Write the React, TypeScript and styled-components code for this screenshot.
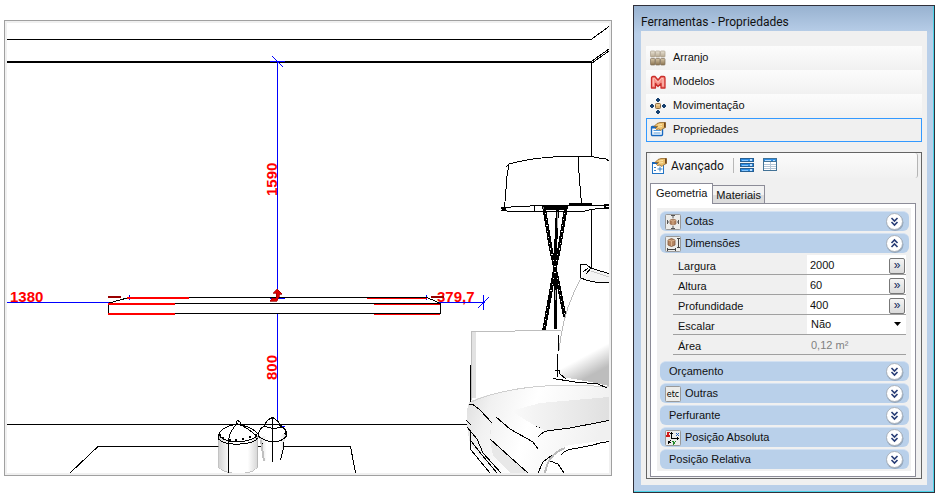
import React from "react";
import styled, { createGlobalStyle } from "styled-components";

const GlobalStyle = createGlobalStyle`
  * { box-sizing: border-box; }
  body { margin: 0; background: #fff; }
  button, input, select { font: inherit; color: inherit; }
`;

const Page = styled.main`
  display: flex;
  align-items: flex-start;
  gap: 21px;
  padding: 5px 6px 4px 4px;
  font: 11px/16px "Liberation Sans", Arial, sans-serif;
  color: #111;
`;

const Viewport = styled.section`
  flex: 1 1 0;
  min-width: 0;
  margin-top: 15px;
  border: 1px solid #a0a0a0;
  padding: 2px;
  background: #f0f0f0;
`;

const SceneSvg = styled.svg`
  display: block;
  width: 100%;
  height: auto;
  background: #fff;
`;

const Dimension = styled.text`
  font: bold 15px "Liberation Sans", Arial, sans-serif;
  fill: #f00;
`;

const Window = styled.aside`
  flex: 0 0 302px;
  border: 1px solid #30303a;
  background: linear-gradient(#98b2d0, #b9cfe9 28px);
  padding: 1px 7px 7px 7px;
  box-shadow: inset -1px -1px 0 #4bd3e8;
`;

const Title = styled.h1`
  margin: 0;
  height: 24px;
  font: 400 12px/30px Roboto, sans-serif;
`;

const Client = styled.div`
  background: #f0f0f0;
  padding: 15px 5px 6px;
`;

const ToolList = styled.nav`
  display: flex;
  flex-direction: column;
  margin-bottom: 10px;
`;

const ToolButton = styled.button<{ $active?: boolean }>`
  display: flex;
  align-items: center;
  gap: 7px;
  height: 24px;
  padding: 0 3px;
  text-align: left;
  border: 1px solid ${(p) => (p.$active ? "#3399ff" : "transparent")};
  background: ${(p) => (p.$active ? "#f0f0f0" : "linear-gradient(#fcfcfc, #f1f1f1)")} border-box;

  span { padding-bottom: 2px; }
`;

const Icon = styled.svg`
  flex: none;
  width: 16px;
  height: 16px;
`;

const Group = styled.div`
  border: 1px solid #646464;
  padding: 0 3px 1px;
`;

const Toolbar = styled.div`
  display: flex;
  align-items: center;
  height: 25px;
  margin-bottom: 5px;
  padding-left: 1px;
  border-right: 1px solid #b4b4b4;
  border-radius: 3px;
  background: linear-gradient(#fbfbfb, #f1f1f1);
`;

const TextTool = styled.button`
  display: flex;
  align-items: center;
  gap: 4px;
  padding: 0;
  border: 0;
  background: none;
  font: 12px/16px Roboto, sans-serif;
`;

const Separator = styled.div`
  width: 1px;
  height: 15px;
  margin: 0 5px 0 9px;
  background: #b8b8b8;
`;

const IconTool = styled.button`
  display: flex;
  padding: 0;
  margin: 0 7px 1px 0;
  border: 0;
  background: none;
`;

const Tabs = styled.div`
  display: flex;
  align-items: flex-end;
`;

const Tab = styled.button<{ $active?: boolean }>`
  height: ${(p) => (p.$active ? "21px" : "18px")};
  margin-bottom: ${(p) => (p.$active ? "-1px" : "0")};
  padding: ${(p) => (p.$active ? "0 5px 2px" : "0 3px")};
  border: 1px solid #8c8c98;
  border-bottom: 0;
  border-left-width: ${(p) => (p.$active ? "1px" : "0")};
  background: ${(p) => (p.$active ? "#fff" : "linear-gradient(#f2f2f2 50%, #dcdcdc 55%)")};
  position: relative;
`;

const TabPage = styled.div`
  margin-right: 2px;
  border: 1px solid #8c8c98;
  background: #fff;
  padding: 4px 4px 5px 6px;
`;

const Sections = styled.div`
  display: flex;
  flex-direction: column;
  gap: 2px;
  padding: 3px 2px 2px 3px;
  background: #f0f0f0;
`;

const SectionHeader = styled.button<{ $icon?: boolean }>`
  display: flex;
  align-items: center;
  gap: 4px;
  width: 100%;
  height: 20px;
  padding: 0 5px 0 ${(p) => (p.$icon ? "5px" : "9px")};
  border: 0;
  border-top: 1px solid #d3e1f2;
  border-radius: 6px;
  background: #b9d0ea;
  text-align: left;

  span { flex: 1; padding-bottom: 1px; }
`;

const Badge = styled.svg`
  flex: none;
  width: 16px;
  height: 16px;
`;

const Round = styled.svg`
  flex: none;
  width: 19px;
  height: 19px;
`;

const Fields = styled.div`
  display: flex;
  flex-direction: column;
  margin: 0 3px 4px 13px;
`;

const Field = styled.div`
  display: flex;
  align-items: stretch;
  height: 20px;
  border-bottom: 1px solid #a0a0a0;
`;

const Label = styled.label`
  flex: 1 1 134px;
  padding: 3px 0 0 5px;
`;

const ValueBox = styled.div<{ $plain?: boolean }>`
  display: flex;
  align-items: center;
  flex: 0 1 99px;
  min-width: 0;
  background: ${(p) => (p.$plain ? "transparent" : "#fff")};
`;

const TextInput = styled.input`
  flex: 1 1 0;
  min-width: 0;
  padding: 0 0 0 3px;
  border: 0;
  background: transparent;
`;

const MoreButton = styled.button`
  width: 16px;
  height: 16px;
  margin: 2px 1px 0 0;
  padding: 0 0 2px;
  border: 1px solid #777;
  border-radius: 2px;
  background: linear-gradient(#f4f4f4, #dadada);
  color: #10285a;
  font-size: 12px;
  line-height: 12px;
`;

const SelectWrap = styled.div`
  position: relative;
  display: flex;
  flex: 1;
`;

const Select = styled.select`
  flex: 1;
  appearance: none;
  border: 0;
  padding: 0 16px 1px 4px;
  background: transparent;
`;

const Arrow = styled.svg`
  position: absolute;
  right: 5px;
  top: 6px;
  width: 7px;
  height: 4px;
  pointer-events: none;
`;

const Output = styled.output`
  padding-left: 4px;
  color: #808080;
`;

const ArrangeIcon = () => (
  <Icon viewBox="0 0 16 16">
    <defs>
      <linearGradient id="blockLight" x2="0" y2="1"><stop stopColor="#e9e3d6" /><stop offset="1" stopColor="#b5a78f" /></linearGradient>
      <linearGradient id="blockDark" x2="0" y2="1"><stop stopColor="#d6c6a8" /><stop offset="1" stopColor="#8b7350" /></linearGradient>
    </defs>
    {[0, 5, 10].map((x) => (
      <g key={x}>
        <rect x={x + 0.5} y="1" width="4.500" height="6" rx=".8" fill="url(#blockLight)" stroke="#aa9e8b" strokeWidth=".7" />
        <rect x={x + 0.5} y="8.500" width="4.500" height="6.500" rx=".8" fill="url(#blockDark)" stroke="#80705a" strokeWidth=".7" />
      </g>
    ))}
  </Icon>
);

const ModelsIcon = () => (
  <Icon viewBox="0 0 16 16">
    <path d="M1.500 14V4Q1.500 2.500 3 2.500H5L8 6L11 2.500H13.500Q15 2.500 15 4V14H11V9.500L8 12.500L5.500 9.500V14Z" fill="#f58f86" stroke="#cb2f2c" strokeWidth="1.300" strokeLinejoin="round" />
    <path d="M3.300 12V4.500H4.500L8 8.500L11.500 4.500H13V12" fill="none" stroke="#ffc4bb" />
  </Icon>
);

const MoveIcon = () => (
  <Icon viewBox="0 0 16 16">
    <g fill="#17406f">
      <path d="M7 0h2v1h1v2H9v1H7V3H6V1h1zM7 16h2v-1h1v-2H9v-1H7v1H6v2h1zM0 7v2h1v1h2V9h1V7H3V6H1v1zM16 7v2h-1v1h-2V9h-1V7h1V6h2v1z" />
    </g>
    <rect x="5.500" y="5.500" width="5" height="5" rx="1" fill="#dfb36f" stroke="#8a6a42" />
    <path d="M6 7h4" stroke="#f8e0b0" />
  </Icon>
);

const Hand = () => (
  <g>
    <path d="M4 4.500L7 1.500L10 .5H15.500V5.500L13 6.500L11 8.500L9 7L6.500 7.500L5.500 6.500L7.500 4.500Z" fill="#ecbf6c" stroke="#8f6428" strokeWidth=".8" />
    <path d="M8 3l4-.5M8 5l4-.5" stroke="#fff0b8" strokeWidth=".8" />
    <path d="M14 0.500h1.500v5H14z" fill="#70461b" />
  </g>
);

const PropertiesIcon = () => (
  <Icon viewBox="0 0 16 16">
    <rect x="1.500" y="4.500" width="11" height="9" rx="1" fill="#fff" stroke="#1768c0" strokeWidth="1.400" />
    <path d="M1 5.500h8" stroke="#1768c0" strokeWidth="2" />
    <path d="M3.500 8.500h7M3.500 11h7" stroke="#5299da" />
    <Hand />
  </Icon>
);

const AdvancedIcon = () => (
  <Icon viewBox="0 0 16 16">
    <rect x="1.500" y="4.500" width="11" height="11" fill="#fff" stroke="#2474c4" />
    <path d="M1 5h8" stroke="#1768c0" strokeWidth="2" />
    <path d="M3 9.500h2M3 12.500h2M6.500 11h5M9 8.500v5" stroke="#3682c8" />
    <Hand />
  </Icon>
);

const RowsIcon = () => (
  <Icon viewBox="0 0 16 16" shapeRendering="crispEdges">
    {[1, 6, 11].map((y) => (
      <g key={y}>
        <rect x="1" y={y} width="14" height="4" fill="#275f92" />
        <rect x="2" y={y + 1} width="12" height="2" fill="#2d8de4" />
        <rect x="3" y={y + 2} width="6" height="1" fill="#83c5ff" />
        <rect x="11" y={y + 1} width="2" height="2" fill="#bfe0ff" />
      </g>
    ))}
  </Icon>
);

const TableIcon = () => (
  <Icon viewBox="0 0 16 16" shapeRendering="crispEdges">
    <rect x="1" y="1" width="14" height="13" fill="#427296" />
    <rect x="2" y="2" width="12" height="2" fill="#2d8de4" />
    <path d="M3 3.500h6M11 3h2" stroke="#b9deff" />
    <rect x="2" y="5" width="12" height="8" fill="#fff" />
    <path d="M2 7.500h12M2 9.500h12M2 11.500h12M8.500 5v8" stroke="#b5c6d6" />
  </Icon>
);

type BadgeKind = "cotas" | "dim" | "etc" | "axes";

const SectionBadge = ({ kind }: { kind: BadgeKind }) => (
  <Badge viewBox="0 0 16 16">
    <rect x=".5" y=".5" width="15" height="15" rx="1" fill="#ececea" stroke="#999" />
    {kind === "cotas" && (
      <>
        <path d="M6 1.500h4M6 14.500h4M8 2v2M8 12v2M2.500 6v4M13.500 6v4M2 8h2M12 8h2" stroke="#555" fill="none" />
        <path d="M5 6l3-1 3 1v4l-3 1-3-1z" fill="#b48460" stroke="#886044" strokeWidth=".6" />
        <path d="M5 6l3 1 3-1M8 7v4" stroke="#e3bd98" strokeWidth=".7" fill="none" />
      </>
    )}
    {kind === "dim" && (
      <>
        <path d="M3 4l3.500-1.500L10 4v5l-3.500 1.500L3 9z" fill="#b48460" stroke="#7d573c" strokeWidth=".8" />
        <path d="M3 4l3.500 1L10 4M6.500 5v5" stroke="#e3bd98" strokeWidth=".8" fill="none" />
        <path d="M2 13.500h9M2.500 12v3M10.500 12v3M13.500 2.500v9M12 2.500h3M12 11.500h3" stroke="#444" fill="none" />
      </>
    )}
    {kind === "etc" && (
      <text x="8" y="11" textAnchor="middle" fontFamily="DejaVu Sans, sans-serif" fontSize="8" fill="#000">etc</text>
    )}
    {kind === "axes" && (
      <g shapeRendering="crispEdges">
        <path d="M6.500 2v7M6.500 8.500H14M5 3.500h3M12.500 7v3M5.500 10.500l-2 2M3.500 11v3M3 12.500h3" stroke="#000" fill="none" />
        <path d="M1.500 3h2.500L2 6h2.500" stroke="#d01818" strokeWidth="1.400" fill="none" />
        <path d="M11 3l3 3M14 3l-3 3" stroke="#2860b8" />
        <path d="M7.500 11l1.500 2M10.500 11L8 15" stroke="#208828" />
      </g>
    )}
  </Badge>
);

const Chevron = ({ up }: { up?: boolean }) => (
  <Round viewBox="0 0 19 19">
    <circle cx="10" cy="10.500" r="8.500" fill="#8799af" opacity=".75" />
    <circle cx="9.500" cy="9.500" r="8" fill="#fff" stroke="#aab2bc" />
    <path d={up ? "M6.500 9l3-3 3 3M6.500 13l3-3 3 3" : "M6.500 6l3 3 3-3M6.500 10l3 3 3-3"} fill="none" stroke="#273c75" strokeWidth="1.600" />
  </Round>
);

const Section = ({ title, kind, open }: { title: string; kind?: BadgeKind; open?: boolean }) => (
  <SectionHeader $icon={!!kind} aria-expanded={!!open}>
    {kind && <SectionBadge kind={kind} />}
    <span>{title}</span>
    <Chevron up={open} />
  </SectionHeader>
);

const NumberField = ({ id, label, value }: { id: string; label: string; value: string }) => (
  <Field>
    <Label htmlFor={id}>{label}</Label>
    <ValueBox>
      <TextInput id={id} defaultValue={value} />
      <MoreButton aria-label={label}>»</MoreButton>
    </ValueBox>
  </Field>
);

const Lamp = () => (
  <g fill="none" stroke="#000">
    <g strokeWidth="3.500">
      <path d="M544 207L551 250L555 268L565 317" />
      <path d="M566 207L559 250L555 268L544 330" />
      <path d="M557.500 208L555.500 250V330" strokeWidth="3" />
    </g>
    <path d="M544 207L551 250L555 268L565 317M566 207L559 250L555 268L544 330" stroke="#fff" strokeWidth="1" strokeDasharray="1 5" />
    <path d="M555.500 290V300M557 212V228" stroke="#aaa" />
    <path d="M506 167L509 164Q530 158 560 156.500H592L599 158L605 158L609 161M509 164L507 176L504.500 208M578.500 157L579 173L581.500 204" />
    <path d="M501 208.500L511 207L540 205.500H609M501 210.500L513 211.500H583L591 209.500L609 207.500M534.500 206V211" />
    <path d="M542 206h26l-3 3h-22z" fill="#888" />
    <path d="M544 208h24M569 204h23" strokeWidth="2" />
    <path d="M501 208l5 1-4 1M609 205h-4v3h4" strokeWidth="2" />
  </g>
);

const Sofa = () => (
  <g fill="none" stroke="#000">
    <path d="M471 332L561 329V392L471 402Z" fill="#fff" stroke="none" />
    <path d="M473.500 332V398" stroke="#e2e2e2" strokeWidth="4" />
    <path d="M471.500 332V400M471 331.500H515M515 330.500H561" stroke="#bdbdbd" />
    <path d="M581 278Q565 308 561 336Q556 370 562 377Q582 380 609 386V283Q595 284 581 278Z" fill="url(#cushion)" stroke="none" />
    <path d="M581 278Q565 308 561 336L559 350" stroke="#bbb" />
    <path d="M469 402Q490 391 540 387Q575 383 609 387V473H492L470 444Q464 415 469 402Z" fill="url(#seat)" stroke="none" />
    <path d="M511 411L540 403L609 397V420L547 431L537 427Z" fill="url(#pad)" stroke="none" />
    <path d="M492 420Q488 438 493 455L510 473H528L490 439Z" fill="#e8e8e8" stroke="none" />
    <path d="M471 402Q500 389 545 386Q575 384 609 387" stroke="#cfcfcf" />
    <path d="M545 473Q550 450 570 445L609 440V473Z" fill="#fff" stroke="none" />
    <path d="M545 473Q548 454 565 448" stroke="#bbb" strokeWidth="2" />
    <path d="M591 268L600 270L609 274V283Q595 284 581 278L586 270Z" fill="#f4f4f4" stroke="none" />
    <path d="M591 271L609 277" stroke="#c8c8c8" />
    <g>
      <path d="M580.500 278V264.500H586L591 268L586 274M588 268L583 272M591 268L597 270L609 273.500M581 278Q591 283 609 283" />
      <path d="M558.500 335V351M557.500 354V377M553 378.500L575 382L598 384L607 388M555 370.500H559L560 374L566 379" />
      <path d="M470.500 365V402M470.500 431V450M469 404.500H473L480 410L492 423M466 420L471 425" />
      <path d="M496 417L510 429L533 442L538 449M490 439L510 457L528 473" />
      <path d="M467 427L477 439L483 453L501 473M471 441L482 455L497 473M471 450L490 473" />
      <path d="M538 437Q543 431 550 430.500L570 428L609 420.500M536 426.500h1M539 427.500h1" />
      <path d="M561 455Q566 449 576 448.500L593 445L600 443L609 441.500" />
      <path d="M538 473L543 462L552 455M550 461L558 464L564 473" />
    </g>
  </g>
);

const Jars = () => (
  <g fill="none" stroke="#000">
    <path d="M218.500 436V467Q222 472 232 473H245Q254 472 257.500 467V436Z" fill="url(#jar)" stroke="#aaa" strokeWidth=".7" />
    <path d="M219 433Q223 427 236 424Q251 426 257 433Q258 440 238 442Q219 441 219 433Z" fill="#fff" />
    <path d="M218.500 434V439Q224 445 240 444Q255 443 257.500 438M238 423Q230 430 228.500 440V473M238 424Q249 428 256 436M236 424v-2l2-1.500 2 1.500v3" />
    <path d="M222 437.500h2M229 439.500h2M235 439.500h2M242 438.500h2M249 436.500h2M255 434.500h2M219 434.500h2" strokeWidth="2" />
    <path d="M258 437L262 443L264 461H280L284 442L287 434Z" fill="url(#jar)" stroke="none" />
    <path d="M264 427Q266 419 272.500 418Q279 420 281 427M264 426Q258 430 258.500 436Q263 441 274 442Q284 441 287 435Q286 428 281 427Q272 430 264 426M272 417V461.500M262 443L263 450M284 442L283 450L280.500 460" />
    <path d="M261 440L264 461" stroke="#c0c0c0" strokeWidth="2" />
    <path d="M271 418h3M280 425l2 3M285 433l2 2" strokeWidth="2" />
  </g>
);

const Scene = () => (
  <SceneSvg viewBox="7 23 602 450" role="img" aria-label="Vista 3D" shapeRendering="crispEdges">
    <defs>
      <linearGradient id="cushion" x2=".25" y2="1"><stop stopColor="#fff" /><stop offset=".8" stopColor="#fff" /><stop offset="1" stopColor="#bdbdbd" /></linearGradient>
      <linearGradient id="seat" x2="1" y2=".2"><stop stopColor="#dcdcdc" /><stop offset=".2" stopColor="#f1f1f1" /><stop offset=".5" stopColor="#fff" /><stop offset="1" stopColor="#f0f0f0" /></linearGradient>
      <linearGradient id="pad"><stop stopColor="#fafafa" /><stop offset="1" stopColor="#e0e0e0" /></linearGradient>
      <linearGradient id="jar"><stop stopColor="#d2d2d2" /><stop offset=".3" stopColor="#fff" /><stop offset=".75" stopColor="#fff" /><stop offset="1" stopColor="#d6d6d6" /></linearGradient>
    </defs>
    <g fill="none" stroke="#000">
      <path d="M7 39.500H591L609 26.500M591.500 62V157M591.500 210V269M592 61L609 49M592 63L609 51" />
      <path d="M7 62H592" strokeWidth="2" />
      <path d="M7 424.500H467M70 473L98 446.500H350.500L355.500 473" />
    </g>
    <Lamp />
    <Sofa />
    <Dimension x="10" y="302">1380</Dimension>
    <Dimension x="437" y="302">379,7</Dimension>
    <Dimension transform="translate(277 196) rotate(-90)">1590</Dimension>
    <Dimension transform="translate(277 380) rotate(-90)">800</Dimension>
    <g fill="none" stroke="#00f">
      <path d="M277.500 61V297M277.500 313V421M272 56L283 67M270 61.500H285" />
      <path d="M7 302.500H112M438 302.500H485M483.500 295V310M478 308L489 297" />
      <path d="M129.500 295V300M133 298.500h2M426.500 295V300M281 426.500H285M270 298.500H285" />
    </g>
    <Jars />
    <g fill="none" stroke="#000">
      <path d="M129 297.500H427L440.500 303.500V313.500H108.500V303.500H440M109 303L129 297.500" />
    </g>
    <g fill="none" stroke="#f00" strokeWidth="2">
      <path d="M127 298H189M108 304H175M108 314H175" />
      <path d="M367 298.500H427M374 304.500H440M374 314.500H440" strokeWidth="1" />
    </g>
    <path d="M108 297H121M431 297H444" stroke="#900" strokeWidth="2" />
    <path d="M277 289L273 293H276V298H272L270 301H277L279 297V294H282Z" fill="#d00" stroke="#900" strokeWidth=".7" />
  </SceneSvg>
);

export default function App() {
  return (
    <>
      <GlobalStyle />
      <Page>
        <Viewport>
          <Scene />
        </Viewport>
        <Window>
          <Title>Ferramentas - Propriedades</Title>
          <Client>
            <ToolList>
              <ToolButton><ArrangeIcon /><span>Arranjo</span></ToolButton>
              <ToolButton><ModelsIcon /><span>Modelos</span></ToolButton>
              <ToolButton><MoveIcon /><span>Movimentação</span></ToolButton>
              <ToolButton $active><PropertiesIcon /><span>Propriedades</span></ToolButton>
            </ToolList>
            <Group>
              <Toolbar>
                <TextTool><AdvancedIcon />Avançado</TextTool>
                <Separator />
                <IconTool aria-label="Lista"><RowsIcon /></IconTool>
                <IconTool aria-label="Tabela"><TableIcon /></IconTool>
              </Toolbar>
              <Tabs role="tablist">
                <Tab role="tab" aria-selected="true" $active>Geometria</Tab>
                <Tab role="tab" aria-selected="false">Materiais</Tab>
              </Tabs>
              <TabPage role="tabpanel">
                <Sections>
                  <Section title="Cotas" kind="cotas" />
                  <Section title="Dimensões" kind="dim" open />
                  <Fields>
                    <NumberField id="largura" label="Largura" value="2000" />
                    <NumberField id="altura" label="Altura" value="60" />
                    <NumberField id="profundidade" label="Profundidade" value="400" />
                    <Field>
                      <Label htmlFor="escalar">Escalar</Label>
                      <ValueBox>
                        <SelectWrap>
                          <Select id="escalar" defaultValue="Não">
                            <option>Não</option>
                            <option>Sim</option>
                          </Select>
                          <Arrow viewBox="0 0 7 4"><path d="M0 0h7L3.500 4z" /></Arrow>
                        </SelectWrap>
                      </ValueBox>
                    </Field>
                    <Field>
                      <Label htmlFor="area">Área</Label>
                      <ValueBox $plain><Output id="area">0,12 m²</Output></ValueBox>
                    </Field>
                  </Fields>
                  <Section title="Orçamento" />
                  <Section title="Outras" kind="etc" />
                  <Section title="Perfurante" />
                  <Section title="Posição Absoluta" kind="axes" />
                  <Section title="Posição Relativa" />
                </Sections>
              </TabPage>
            </Group>
          </Client>
        </Window>
      </Page>
    </>
  );
}
